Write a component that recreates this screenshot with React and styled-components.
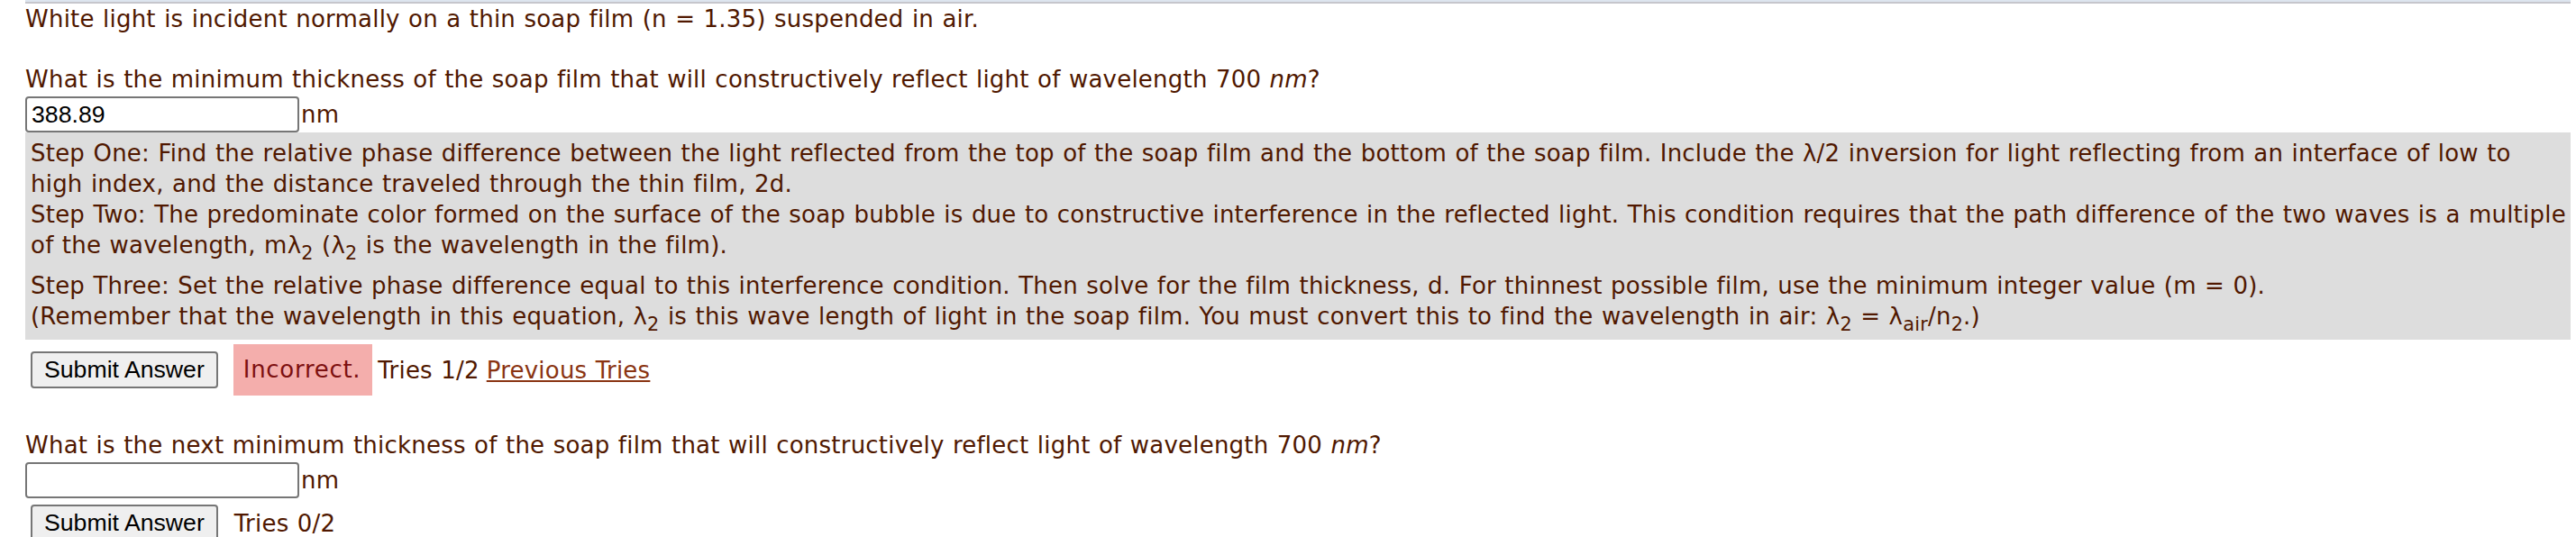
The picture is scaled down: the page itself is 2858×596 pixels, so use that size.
import React from 'react';
import styled, { createGlobalStyle } from 'styled-components';

const Global = createGlobalStyle`
  html, body { margin: 0; padding: 0; background: #ffffff; }
  body {
    font-family: "DejaVu Sans", Verdana, sans-serif;
    font-size: 26px;
    line-height: 34px;
    letter-spacing: 0.22px;
    word-spacing: 0.88px;
    color: #501800;
  }
`;

const Page = styled.div`
  padding: 0 6px 0 28px;
`;

const TopRule = styled.div`
  height: 2px;
  background: #dde5ef;
  border-bottom: 2px solid #c6c6cc;
`;

const Text = styled.div`
  margin-top: ${(p) => p.$mt || 0}px;
  white-space: nowrap;
`;

const InputRow = styled.div`
  display: flex;
  align-items: baseline;
  padding-top: 2px;
`;

const Answer = styled.input`
  box-sizing: border-box;
  width: 304px;
  height: 40px;
  margin: 0 2px 0 0;
  padding: 0 5px;
  border: 2px solid #767676;
  border-radius: 4px;
  font-family: "Liberation Sans", Arial, sans-serif;
  font-size: 26.67px;
  letter-spacing: 0;
  word-spacing: 0;
  color: #000000;
  background: #ffffff;
  outline: none;
`;

const Unit = styled.span``;

const Hint = styled.div`
  background: #dddddd;
  padding: 6px 6px 9px 6px;
`;

const HintBlock = styled.div`
  margin-top: ${(p) => p.$mt || 0}px;
`;

const Line = styled.div`
  white-space: nowrap;
`;

const Sub = styled.sub`
  font-size: 0.8em;
  line-height: 0;
  vertical-align: -0.32em;
`;

const StatusRow = styled.div`
  display: flex;
  align-items: center;
  margin-top: ${(p) => p.$mt || 0}px;
  white-space: nowrap;
`;

const SubmitButton = styled.button`
  box-sizing: border-box;
  height: 41px;
  margin: 0 17px 0 6px;
  padding: 0 13px;
  border: 2px solid #767676;
  border-radius: 4px;
  background: #efefef;
  font-family: "Liberation Sans", Arial, sans-serif;
  font-size: 26.67px;
  letter-spacing: 0;
  word-spacing: 0;
  color: #000000;
`;

const Verdict = styled.span`
  background: #f4aeac;
  color: #7d1010;
  padding: 11px 13px 11px 11px;
  line-height: 35px;
  letter-spacing: 0.7px;
`;

const Tries = styled.span`
  margin-left: ${(p) => p.$ml || 0}px;
`;

const PrevLink = styled.a`
  color: #8a3412;
  text-decoration: underline;
  margin-left: 8px;
`;

const lam2 = (
  <>
    λ<Sub>2</Sub>
  </>
);

export default function App() {
  return (
    <>
      <Global />
      <Page>
        <TopRule />
        <Text>White light is incident normally on a thin soap film (n = 1.35) suspended in air.</Text>
        <Text $mt={33}>
          What is the minimum thickness of the soap film that will constructively reflect light of wavelength 700 <i>nm</i>?
        </Text>
        <InputRow>
          <Answer type="text" defaultValue="388.89" />
          <Unit>nm</Unit>
        </InputRow>
        <Hint>
          <HintBlock>
            <Line>
              Step One: Find the relative phase difference between the light reflected from the top of the soap film and the bottom of the soap film. Include the λ/2 inversion for light reflecting from an interface of low to
            </Line>
            <Line>high index, and the distance traveled through the thin film, 2d.</Line>
          </HintBlock>
          <HintBlock>
            <Line>
              Step Two: The predominate color formed on the surface of the soap bubble is due to constructive interference in the reflected light. This condition requires that the path difference of the two waves is a multiple
            </Line>
            <Line>
              of the wavelength, m{lam2} ({lam2} is the wavelength in the film).
            </Line>
          </HintBlock>
          <HintBlock $mt={11}>
            <Line>
              Step Three: Set the relative phase difference equal to this interference condition. Then solve for the film thickness, d. For thinnest possible film, use the minimum integer value (m = 0).
            </Line>
            <Line>
              (Remember that the wavelength in this equation, {lam2} is this wave length of light in the soap film. You must convert this to find the wavelength in air: {lam2} = λ<Sub>air</Sub>/n<Sub>2</Sub>.)
            </Line>
          </HintBlock>
        </Hint>
        <StatusRow $mt={5}>
          <SubmitButton type="button">Submit Answer</SubmitButton>
          <Verdict>Incorrect.</Verdict>
          <Tries $ml={6}>Tries 1/2</Tries>
          <PrevLink href="#">Previous Tries</PrevLink>
        </StatusRow>
        <Text $mt={38}>
          What is the next minimum thickness of the soap film that will constructively reflect light of wavelength 700 <i>nm</i>?
        </Text>
        <InputRow>
          <Answer type="text" defaultValue="" />
          <Unit>nm</Unit>
        </InputRow>
        <StatusRow $mt={7}>
          <SubmitButton type="button">Submit Answer</SubmitButton>
          <Tries $ml={1}>Tries 0/2</Tries>
        </StatusRow>
      </Page>
    </>
  );
}
